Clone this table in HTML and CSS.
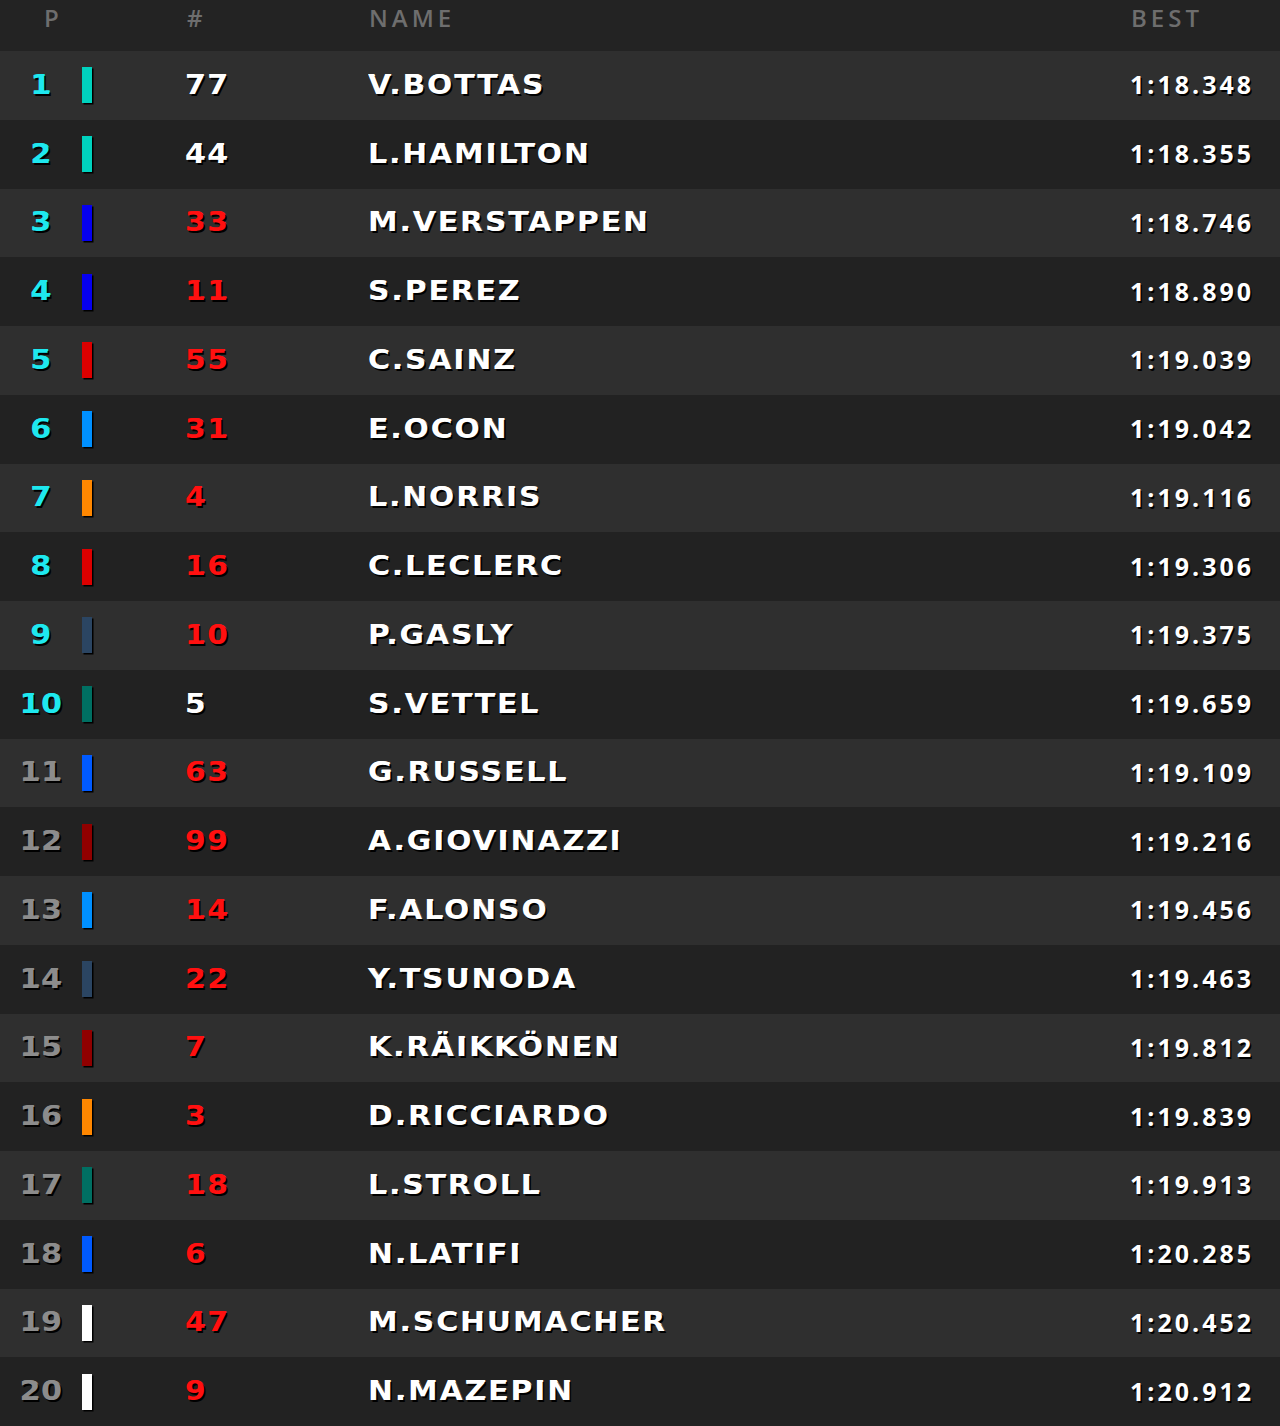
FILE: index.html
```html
<!DOCTYPE html>
<html>
<head>
<meta charset="utf-8">
<link rel="stylesheet" href="styles.css">
</head>
<body>
<div class="table">
  <div class="row head">
    <div class="hp">P</div>
    <div></div>
    <div class="hn">#</div>
    <div class="hname">NAME</div>
    <div class="hbest">BEST</div>
  </div>
  <div class="row odd"><div class="pos top">1</div><div class="barc"><span class="bar merc"></span></div><div class="num">77</div><div class="name">V.BOTTAS</div><div class="best">1:18.348</div></div>
  <div class="row even"><div class="pos top">2</div><div class="barc"><span class="bar merc"></span></div><div class="num">44</div><div class="name">L.HAMILTON</div><div class="best">1:18.355</div></div>
  <div class="row odd"><div class="pos top">3</div><div class="barc"><span class="bar rbr"></span></div><div class="num red">33</div><div class="name">M.VERSTAPPEN</div><div class="best">1:18.746</div></div>
  <div class="row even"><div class="pos top">4</div><div class="barc"><span class="bar rbr"></span></div><div class="num red">11</div><div class="name">S.PEREZ</div><div class="best">1:18.890</div></div>
  <div class="row odd"><div class="pos top">5</div><div class="barc"><span class="bar fer"></span></div><div class="num red">55</div><div class="name">C.SAINZ</div><div class="best">1:19.039</div></div>
  <div class="row even"><div class="pos top">6</div><div class="barc"><span class="bar alp"></span></div><div class="num red">31</div><div class="name">E.OCON</div><div class="best">1:19.042</div></div>
  <div class="row odd"><div class="pos top">7</div><div class="barc"><span class="bar mcl"></span></div><div class="num red">4</div><div class="name">L.NORRIS</div><div class="best">1:19.116</div></div>
  <div class="row even"><div class="pos top">8</div><div class="barc"><span class="bar fer"></span></div><div class="num red">16</div><div class="name">C.LECLERC</div><div class="best">1:19.306</div></div>
  <div class="row odd"><div class="pos top">9</div><div class="barc"><span class="bar at"></span></div><div class="num red">10</div><div class="name">P.GASLY</div><div class="best">1:19.375</div></div>
  <div class="row even"><div class="pos top">10</div><div class="barc"><span class="bar am"></span></div><div class="num">5</div><div class="name">S.VETTEL</div><div class="best">1:19.659</div></div>
  <div class="row odd"><div class="pos">11</div><div class="barc"><span class="bar wil"></span></div><div class="num red">63</div><div class="name">G.RUSSELL</div><div class="best">1:19.109</div></div>
  <div class="row even"><div class="pos">12</div><div class="barc"><span class="bar ar"></span></div><div class="num red">99</div><div class="name">A.GIOVINAZZI</div><div class="best">1:19.216</div></div>
  <div class="row odd"><div class="pos">13</div><div class="barc"><span class="bar alp"></span></div><div class="num red">14</div><div class="name">F.ALONSO</div><div class="best">1:19.456</div></div>
  <div class="row even"><div class="pos">14</div><div class="barc"><span class="bar at"></span></div><div class="num red">22</div><div class="name">Y.TSUNODA</div><div class="best">1:19.463</div></div>
  <div class="row odd"><div class="pos">15</div><div class="barc"><span class="bar ar"></span></div><div class="num red">7</div><div class="name">K.RÄIKKÖNEN</div><div class="best">1:19.812</div></div>
  <div class="row even"><div class="pos">16</div><div class="barc"><span class="bar mcl"></span></div><div class="num red">3</div><div class="name">D.RICCIARDO</div><div class="best">1:19.839</div></div>
  <div class="row odd"><div class="pos">17</div><div class="barc"><span class="bar am"></span></div><div class="num red">18</div><div class="name">L.STROLL</div><div class="best">1:19.913</div></div>
  <div class="row even"><div class="pos">18</div><div class="barc"><span class="bar wil"></span></div><div class="num red">6</div><div class="name">N.LATIFI</div><div class="best">1:20.285</div></div>
  <div class="row odd"><div class="pos">19</div><div class="barc"><span class="bar haas"></span></div><div class="num red">47</div><div class="name">M.SCHUMACHER</div><div class="best">1:20.452</div></div>
  <div class="row even"><div class="pos">20</div><div class="barc"><span class="bar haas"></span></div><div class="num red">9</div><div class="name">N.MAZEPIN</div><div class="best">1:20.912</div></div>
</div>
</body>
</html>
```
FILE: styles.css
```css
html, body {
  margin: 0;
  padding: 0;
  background: #222222;
}
.table {
  width: 1280px;
}
.row {
  display: grid;
  grid-template-columns: 82px 103px 183px 1fr 150px;
  align-items: center;
  height: 68.75px;
  box-sizing: border-box;
  padding-bottom: 2px;
  font-family: "DejaVu Sans", sans-serif;
  font-weight: bold;
  font-size: 27px;
  color: #fff;
  text-shadow: 1.5px 1.5px 0 #000, 0.5px 0 0 #fff;
}
.row.head {
  height: 51px;
  align-items: start;
  padding-top: 1px;
  padding-bottom: 0;
  background: #232323;
  font-family: "Open Sans", sans-serif;
  font-weight: 600;
  font-size: 24px;
  letter-spacing: 4px;
  color: #6e6e6e;
  text-shadow: none;
}
.hp { padding-left: 44px; }
.hn { padding-left: 2px; }
.hname { padding-left: 1px; }
.hbest { padding-left: 1px; }
.odd { background: #2f2f2f; }
.even { background: #222222; }
.pos {
  text-align: center;
  letter-spacing: 0.5px;
  color: #8c8c8c;
  transform: scaleX(1.12);
  transform-origin: 41px 50%;
}
.pos.top { color: #1ee8ef; }
.barc {
  display: flex;
  align-items: center;
  padding-top: 2px;
}
.bar {
  display: block;
  width: 10px;
  height: 36px;
  box-shadow: 1.5px 1.5px 0 #000;
}
.merc { background: #00d2be; }
.rbr { background: #0600ef; }
.fer { background: #dc0000; }
.alp { background: #0090ff; }
.mcl { background: #ff8700; }
.at { background: #2b4562; }
.am { background: #006f62; }
.wil { background: #005aff; }
.ar { background: #900000; }
.haas { background: #ffffff; }
.num {
  letter-spacing: 1.5px;
  transform: scaleX(1.1);
  transform-origin: 0 50%;
}
.num.red { color: #ff1010; text-shadow: 1.5px 1.5px 0 #000, 0.5px 0 0 #ff1010; }
.pos { text-shadow: 1.5px 1.5px 0 #000, 0.5px 0 0 #8c8c8c; }
.pos.top { text-shadow: 1.5px 1.5px 0 #000, 0.5px 0 0 #1ee8ef; }
.name {
  letter-spacing: 1.8px;
  white-space: nowrap;
  transform: scaleX(1.1);
  transform-origin: 0 50%;
}
.best {
  font-family: "Open Sans", sans-serif;
  font-weight: 700;
  font-size: 25px;
  letter-spacing: 3px;
  text-shadow: 1.5px 1.5px 0 #000;
}
```
